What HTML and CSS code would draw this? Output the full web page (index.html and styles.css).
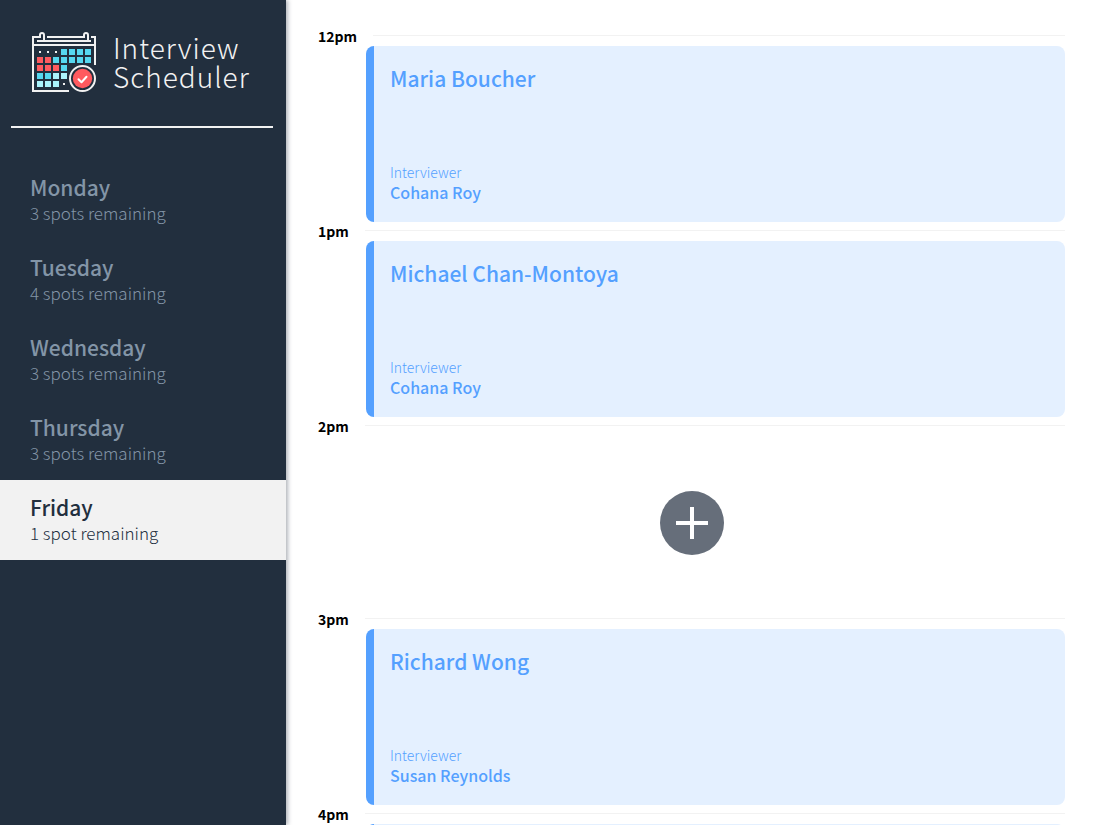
FILE: index.html
```html
<!DOCTYPE html>
<html lang="en">
<head>
<meta charset="utf-8">
<title>Interview Scheduler</title>
<link rel="stylesheet" href="styles.css">
</head>
<body>
<main class="layout">
  <section class="sidebar">
    <header class="brand">
      <svg class="brand-icon" viewBox="0 0 66 62" aria-hidden="true">
        <g fill="none" stroke="#f2f2f2" stroke-width="2">
          <path d="M38 60H2V6h7M16 6h36M60 6h4v28M3 14h60M6 10h54"/>
          <path d="M9 7V4a2 2 0 0 1 4 0v6M53 7V4a2 2 0 0 1 4 0v6"/>
        </g>
        <g fill="#f2f2f2"><path d="M8 20h2v2H8zM16 20h2v2h-2zM24 20h2v2h-2zM32 52h2v2h-2z"/></g>
        <g fill="#56d8f0"><path d="M30 18h6v6h-6zM38 18h6v6h-6zM46 18h6v6h-6zM54 18h6v6h-6zM22 26h6v6h-6zM30 26h6v6h-6zM38 26h6v6h-6zM46 26h6v6h-6zM54 26h6v6h-6zM30 34h6v6h-6zM6 42h6v6H6zM14 42h6v6h-6z"/></g>
        <g fill="#ff5a5f"><path d="M6 26h6v6H6zM14 26h6v6h-6zM6 34h6v6H6zM14 34h6v6h-6zM22 34h6v6h-6z"/></g>
        <g fill="#aaf3fc"><path d="M22 42h6v6h-6zM30 42h6v6h-6zM6 50h6v6H6zM14 50h6v6h-6zM22 50h6v6h-6z"/></g>
        <circle cx="51.5" cy="47.5" r="15" fill="#222f3e"/>
        <circle cx="51.5" cy="47.5" r="12.5" fill="#222f3e" stroke="#f2f2f2" stroke-width="2"/>
        <circle cx="51.5" cy="47.5" r="9.7" fill="#ff5a5f"/>
        <path d="M47.5 48.2l3 3 5-5.4" fill="none" stroke="#fff" stroke-width="2" stroke-linecap="round" stroke-linejoin="round"/>
      </svg>
      <h1 class="brand-name">Interview<br>Scheduler</h1>
    </header>
    <hr class="divider">
    <nav class="days">
      <button class="day" type="button"><span class="day-name">Monday</span><span class="day-spots">3 spots remaining</span></button>
      <button class="day" type="button"><span class="day-name">Tuesday</span><span class="day-spots">4 spots remaining</span></button>
      <button class="day" type="button"><span class="day-name">Wednesday</span><span class="day-spots">3 spots remaining</span></button>
      <button class="day" type="button"><span class="day-name">Thursday</span><span class="day-spots">3 spots remaining</span></button>
      <button class="day day-selected" type="button" aria-current="true"><span class="day-name">Friday</span><span class="day-spots">1 spot remaining</span></button>
    </nav>
  </section>
  <section class="schedule">
    <article class="slot">
      <header class="slot-time"><h2 class="time">12pm</h2><hr class="rule"></header>
      <div class="card"><h3 class="student">Maria Boucher</h3><div><h4 class="label">Interviewer</h4><p class="interviewer">Cohana Roy</p></div></div>
    </article>
    <article class="slot">
      <header class="slot-time"><h2 class="time">1pm</h2><hr class="rule"></header>
      <div class="card"><h3 class="student">Michael Chan-Montoya</h3><div><h4 class="label">Interviewer</h4><p class="interviewer">Cohana Roy</p></div></div>
    </article>
    <article class="slot">
      <header class="slot-time"><h2 class="time">2pm</h2><hr class="rule"></header>
      <div class="empty">
        <button class="add" type="button" aria-label="Add appointment">
          <svg class="add-icon" viewBox="0 0 64 64" aria-hidden="true"><circle cx="32" cy="32" r="32" fill="#666e7a"/><path d="M32 16v32M16 32h32" stroke="#fff" stroke-width="4"/></svg>
        </button>
      </div>
    </article>
    <article class="slot">
      <header class="slot-time"><h2 class="time">3pm</h2><hr class="rule"></header>
      <div class="card"><h3 class="student">Richard Wong</h3><div><h4 class="label">Interviewer</h4><p class="interviewer">Susan Reynolds</p></div></div>
    </article>
    <article class="slot">
      <header class="slot-time"><h2 class="time">4pm</h2><hr class="rule"></header>
      <div class="card"></div>
    </article>
  </section>
</main>
</body>
</html>
```
FILE: styles.css
```css
* {
  box-sizing: border-box;
}

body,
h1,
h2,
h3,
h4,
p {
  margin: 0;
}

body,
button {
  font-family: "Noto Sans CJK SC", "Noto Sans", sans-serif;
}

.layout {
  display: flex;
  height: 100vh;
  overflow: hidden;
  background: #fff;
}

.sidebar {
  flex: 0 0 286px;
  background: #222f3e;
  box-shadow: 2px 0 4px rgba(34, 47, 62, 0.35);
}

.brand {
  display: flex;
  align-items: center;
  gap: 16px;
  padding: 31px 0 33px 31px;
}

.brand-icon {
  width: 66px;
  height: 62px;
}

.brand-name {
  color: #f2f2f2;
  font-size: 28px;
  font-weight: 300;
  line-height: 29px;
  letter-spacing: 1px;
}

.divider {
  height: 2px;
  margin: 0 13px 32px 11px;
  border: 0;
  background: #f2f2f2;
}

.day {
  display: flex;
  flex-direction: column;
  justify-content: center;
  width: 100%;
  height: 80px;
  padding: 0 30px;
  border: 0;
  background: none;
  color: #8395a7;
  text-align: left;
  cursor: pointer;
}

.day-selected {
  background: #f2f2f2;
  color: #222f3e;
}

.day-name {
  font-size: 21px;
  font-weight: 500;
  line-height: 26px;
}

.day-spots {
  font-size: 17px;
  font-weight: 300;
  line-height: 26px;
}

.schedule {
  flex: 1;
  min-width: 0;
  padding: 27px 28px 0 32px;
}

.slot-time {
  display: flex;
  align-items: center;
  gap: 16px;
}

.time {
  font-size: 14px;
  font-weight: 700;
  line-height: 19px;
  color: #000;
}

.rule {
  flex: 1;
  height: 1px;
  margin: 0 0 2px;
  border: 0;
  background: #f2f2f2;
}

.card {
  display: flex;
  flex-direction: column;
  justify-content: space-between;
  height: 176px;
  margin-left: 48px;
  padding: 16px 16px 20px;
  border-left: 8px solid #54a0ff;
  border-radius: 8px;
  background: #e4f0ff;
  color: #54a0ff;
}

.student {
  font-size: 21px;
  font-weight: 500;
  line-height: 32px;
}

.label {
  font-size: 14px;
  font-weight: 300;
  line-height: 20px;
}

.interviewer {
  font-size: 16px;
  font-weight: 500;
  line-height: 20px;
}

.empty {
  display: flex;
  align-items: flex-start;
  justify-content: center;
  height: 174px;
  padding-top: 55px;
}

.add {
  padding: 0;
  border: 0;
  background: none;
  cursor: pointer;
}

.add-icon {
  display: block;
  width: 64px;
  height: 64px;
}
```
